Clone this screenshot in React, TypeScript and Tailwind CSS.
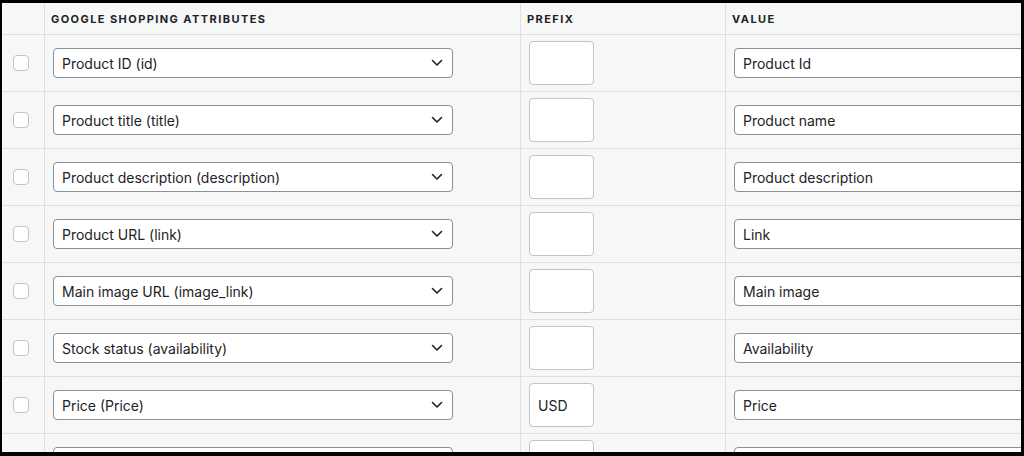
import React from 'react';

// Строки от таблицата с атрибути
const rows = [
  { attr: 'Product ID (id)', prefix: '', value: 'Product Id' },
  { attr: 'Product title (title)', prefix: '', value: 'Product name' },
  { attr: 'Product description (description)', prefix: '', value: 'Product description' },
  { attr: 'Product URL (link)', prefix: '', value: 'Link' },
  { attr: 'Main image URL (image_link)', prefix: '', value: 'Main image' },
  { attr: 'Stock status (availability)', prefix: '', value: 'Availability' },
  { attr: 'Price (Price)', prefix: 'USD', value: 'Price' },
  { attr: '', prefix: '', value: '' },
];

function Chevron() {
  return (
    <svg width="12" height="8" viewBox="0 0 12 8" className="shrink-0">
      <path d="M1.5 1.5 L6 6 L10.5 1.5" fill="none" stroke="#1d2327" strokeWidth="1.6" strokeLinecap="round" strokeLinejoin="round" />
    </svg>
  );
}

export default function App() {
  return (
    <div className="w-[1024px] h-[456px] bg-black overflow-hidden pt-[3px] pl-[2px] pr-[3px] pb-[4px] font-['Inter','Liberation_Sans',sans-serif] text-[#1d2327]">
      <div className="w-full h-full bg-[#f6f7f7] overflow-hidden">
        <div className="w-[1100px]">
          {/* header */}
          <div className="grid grid-cols-[43px_476px_205px_1fr] h-[32px] border-b border-[#e0e0e0] text-[11px] font-bold uppercase tracking-[0.13em]">
            <div className="border-r border-[#e0e0e0]" />
            <div className="border-r border-[#e0e0e0] flex items-center pl-[6px] pt-[1px]">Google Shopping Attributes</div>
            <div className="border-r border-[#e0e0e0] flex items-center pl-[6px] pt-[1px]">Prefix</div>
            <div className="flex items-center pl-[6px] pt-[1px]">Value</div>
          </div>

          {rows.map((r, i) => (
            <div key={i} className="grid grid-cols-[43px_476px_205px_1fr] h-[57px] border-b border-[#e0e0e0] text-[14px]">
              <div className="border-r border-[#e0e0e0] flex items-center pl-[11px]">
                <div className="w-[16px] h-[16px] rounded-[4px] border border-[#c3c4c7] bg-white" />
              </div>
              <div className="border-r border-[#e0e0e0] flex items-center pl-[8px]">
                <div className="w-[400px] h-[30px] rounded-[4px] border border-[#8c8f94] bg-white flex items-center justify-between pl-[8px] pr-[9px]">
                  <span>{r.attr}</span>
                  <Chevron />
                </div>
              </div>
              <div className="border-r border-[#e0e0e0] flex items-center pl-[8px]">
                <div className="w-[65px] h-[44px] rounded-[4px] border border-[#c3c4c7] bg-white flex items-center pl-[8px]">
                  {r.prefix}
                </div>
              </div>
              <div className="flex items-center pl-[8px]">
                <div className="w-[340px] h-[30px] rounded-l-[4px] border border-[#8c8f94] bg-white flex items-center pl-[8px]">
                  {r.value}
                </div>
              </div>
            </div>
          ))}
        </div>
      </div>
    </div>
  );
}
